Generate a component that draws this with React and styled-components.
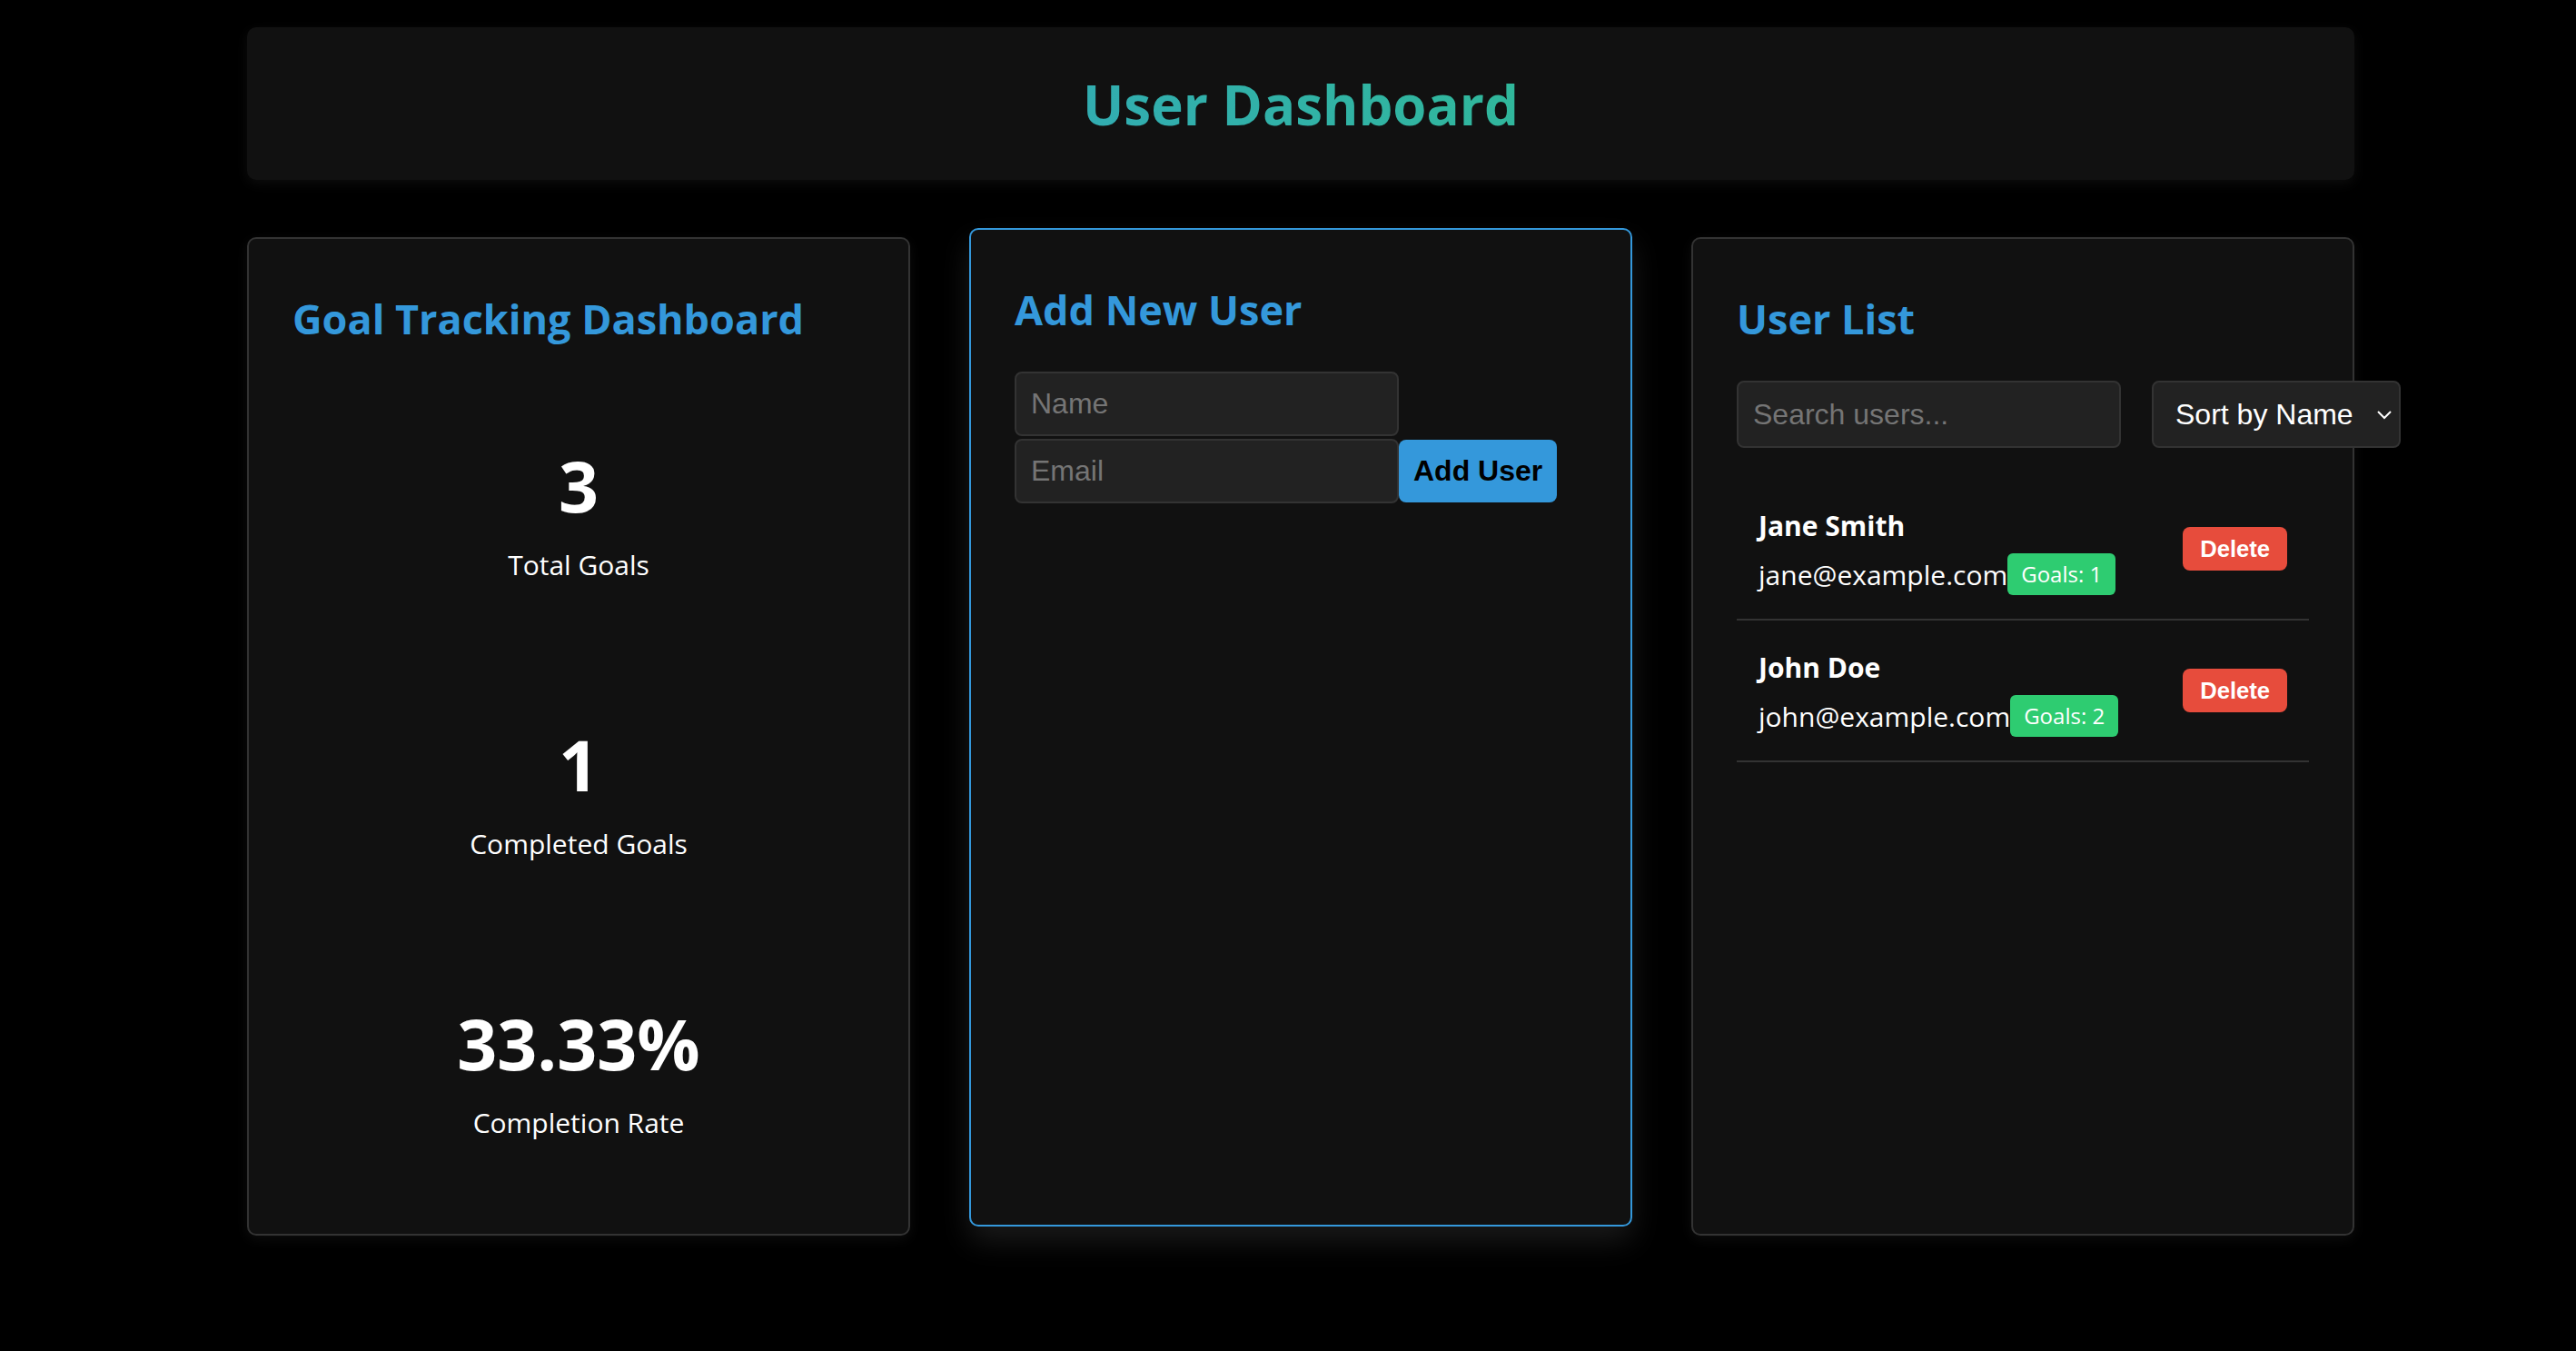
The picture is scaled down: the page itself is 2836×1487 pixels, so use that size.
import React, { useState } from 'react';
import styled, { createGlobalStyle } from 'styled-components';

const GlobalStyle = createGlobalStyle`
  body {
    margin: 0;
    background: #000;
    color: #fff;
    font-family: 'Open Sans', 'Noto Sans', sans-serif;
  }
`;

const Page = styled.div`
  padding: 30px 0 130px 28px;
`;

const Container = styled.div`
  width: 2320px;
  margin: 0 auto;
`;

const Header = styled.header`
  background: #111;
  border-radius: 10px;
  padding: 50px 0 47px;
  margin-bottom: 63px;
  text-align: center;
  box-shadow: 0 4px 14px rgba(255, 255, 255, 0.05);
`;

const Title = styled.h1`
  margin: 0;
  font-size: 60px;
  line-height: 71px;
  font-weight: 700;
  background: linear-gradient(45deg, #3498db, #2ecc71);
  -webkit-background-clip: text;
  background-clip: text;
  color: transparent;
`;

const Grid = styled.div`
  display: grid;
  grid-template-columns: repeat(3, 1fr);
  gap: 65px;
`;

const Card = styled.section`
  background: #111;
  border: 2px solid ${(p) => (p.$active ? '#3498db' : '#333')};
  border-radius: 10px;
  padding: 48px;
  min-width: 0;
  transform: ${(p) => (p.$active ? 'translateY(-10px)' : 'none')};
  box-shadow: ${(p) =>
    p.$active
      ? '0 16px 32px rgba(255, 255, 255, 0.1)'
      : '0 4px 14px rgba(255, 255, 255, 0.05)'};
`;

const CardTitle = styled.h2`
  margin: 0 0 28px;
  color: #3498db;
  font-size: 45px;
  line-height: 80px;
  font-weight: 700;
`;

/* goal stats */
const StatList = styled.div`
  display: flex;
  flex-direction: column;
  gap: 152px;
  padding: 68px 0 54px;
`;

const Stat = styled.div`
  text-align: center;
`;

const StatValue = styled.div`
  font-size: 77px;
  line-height: 96px;
  font-weight: 700;
`;

const StatLabel = styled.div`
  margin-top: 19px;
  font-size: 30px;
  line-height: 40px;
`;

/* add user form */
const Form = styled.form`
  display: flex;
  flex-wrap: wrap;
  align-items: center;
  row-gap: 3px;
`;

const Input = styled.input`
  box-sizing: border-box;
  width: 423px;
  height: ${(p) => p.$h || 71}px;
  padding: 0 16px;
  background: #222;
  border: 2px solid #333;
  border-radius: 8px;
  color: #fff;
  font-family: 'Liberation Sans', Arial, sans-serif;
  font-size: 32px;
  outline: none;

  &::placeholder {
    color: #757575;
  }
`;

const PrimaryButton = styled.button`
  height: 69px;
  padding: 0 16px;
  background: #3498db;
  color: #000;
  border: none;
  border-radius: 8px;
  font-family: 'Liberation Sans', Arial, sans-serif;
  font-size: 32px;
  font-weight: 700;
`;

/* user list */
const Toolbar = styled.div`
  display: flex;
  gap: 34px;
  margin-bottom: 34px;
`;

const SelectWrap = styled.div`
  position: relative;
  flex-shrink: 0;
  width: 274px;
  height: 74px;
`;

const Select = styled.select`
  appearance: none;
  box-sizing: border-box;
  width: 100%;
  height: 100%;
  padding: 0 40px 0 24px;
  background: #222;
  border: 2px solid #333;
  border-radius: 8px;
  color: #fff;
  font-family: 'Liberation Sans', Arial, sans-serif;
  font-size: 32px;
  outline: none;
`;

const Chevron = styled.svg`
  position: absolute;
  right: 9px;
  top: 50%;
  width: 18px;
  height: 12px;
  transform: translateY(-50%);
  pointer-events: none;
`;

const UserList = styled.ul`
  list-style: none;
  margin: 0;
  padding: 0;
`;

const UserItem = styled.li`
  display: flex;
  justify-content: space-between;
  align-items: center;
  padding: 24px;
  border-bottom: 2px solid #333;
`;

const UserName = styled.div`
  font-size: 30px;
  line-height: 56px;
  font-weight: 700;
`;

const EmailLine = styled.div`
  display: flex;
  align-items: center;
  height: 50px;
  font-size: 30px;
`;

const Badge = styled.span`
  padding: 6px 15px;
  background: #2ecc71;
  border-radius: 6px;
  font-size: 24px;
  line-height: 34px;
  color: #fff;
`;

const DeleteButton = styled.button`
  height: 48px;
  padding: 0 19px;
  background: #e74c3c;
  color: #fff;
  border: none;
  border-radius: 8px;
  font-family: 'Liberation Sans', Arial, sans-serif;
  font-size: 25.6px;
  font-weight: 700;
`;

const initialUsers = [
  { id: 2, name: 'Jane Smith', email: 'jane@example.com', goals: 1 },
  { id: 1, name: 'John Doe', email: 'john@example.com', goals: 2 },
];

const App = () => {
  const [users, setUsers] = useState(initialUsers);
  const [search, setSearch] = useState('');

  const stats = [
    { value: '3', label: 'Total Goals' },
    { value: '1', label: 'Completed Goals' },
    { value: '33.33%', label: 'Completion Rate' },
  ];

  const visible = users.filter((u) =>
    u.name.toLowerCase().includes(search.toLowerCase())
  );

  return (
    <Page>
      <GlobalStyle />
      <Container>
        <Header>
          <Title>User Dashboard</Title>
        </Header>

        <Grid>
          <Card>
            <CardTitle>Goal Tracking Dashboard</CardTitle>
            <StatList>
              {stats.map((s) => (
                <Stat key={s.label}>
                  <StatValue>{s.value}</StatValue>
                  <StatLabel>{s.label}</StatLabel>
                </Stat>
              ))}
            </StatList>
          </Card>

          <Card $active>
            <CardTitle>Add New User</CardTitle>
            <Form onSubmit={(e) => e.preventDefault()}>
              <Input placeholder="Name" />
              <Input placeholder="Email" />
              <PrimaryButton type="submit">Add User</PrimaryButton>
            </Form>
          </Card>

          <Card>
            <CardTitle>User List</CardTitle>
            <Toolbar>
              <Input
                $h={74}
                placeholder="Search users..."
                value={search}
                onChange={(e) => setSearch(e.target.value)}
              />
              <SelectWrap>
                <Select defaultValue="name">
                  <option value="name">Sort by Name</option>
                  <option value="goals">Sort by Goals</option>
                </Select>
                <Chevron viewBox="0 0 18 12" fill="none">
                  <path d="M2 3l7 7 7-7" stroke="#fff" strokeWidth="2" />
                </Chevron>
              </SelectWrap>
            </Toolbar>
            <UserList>
              {visible.map((u) => (
                <UserItem key={u.id}>
                  <div>
                    <UserName>{u.name}</UserName>
                    <EmailLine>
                      {u.email}
                      <Badge>Goals: {u.goals}</Badge>
                    </EmailLine>
                  </div>
                  <DeleteButton
                    onClick={() => setUsers(users.filter((x) => x.id !== u.id))}
                  >
                    Delete
                  </DeleteButton>
                </UserItem>
              ))}
            </UserList>
          </Card>
        </Grid>
      </Container>
    </Page>
  );
};

export default App;
